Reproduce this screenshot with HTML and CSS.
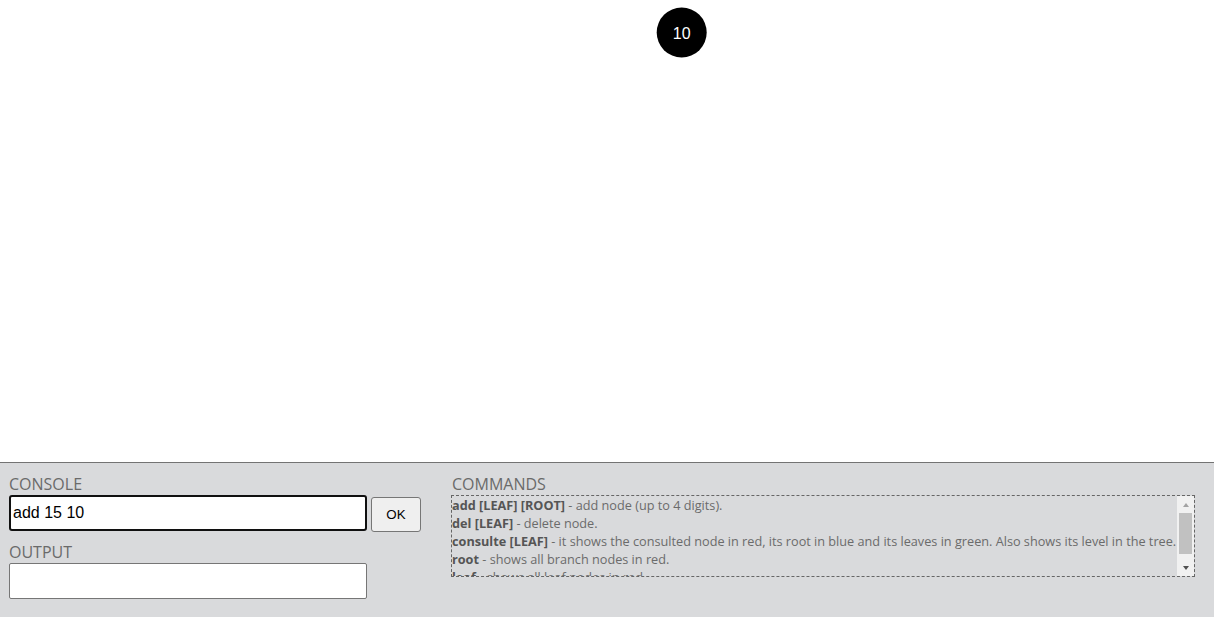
FILE: index.html
```html
<!DOCTYPE html>
<html lang="en">
<head>
<meta charset="utf-8">
<title>Tree</title>
<link rel="stylesheet" href="styles.css">
</head>
<body>
<div class="tree">
  <svg class="tree-canvas" width="1214" height="462" viewBox="0 0 1214 462">
    <g class="node">
      <circle cx="681.7" cy="32.5" r="25" fill="#000"/>
      <text x="681.7" y="38.5" text-anchor="middle" fill="#fff" font-family="Liberation Sans, Arial, sans-serif" font-size="16">10</text>
    </g>
  </svg>
</div>
<div class="panel">
  <div class="left">
    <div class="label">CONSOLE</div>
    <div class="console-row">
      <input class="field field-active" type="text" value="add 15 10">
      <button class="ok">OK</button>
    </div>
    <div class="label label-output">OUTPUT</div>
    <input class="field" type="text" value="">
  </div>
  <div class="right">
    <div class="label">COMMANDS</div>
    <div class="commands">
      <div class="cmd-text">
        <div><b>add [LEAF] [ROOT]</b> - add node (up to 4 digits).</div>
        <div><b>del [LEAF]</b> - delete node.</div>
        <div><b>consulte [LEAF]</b> - it shows the consulted node in red, its root in blue and its leaves in green. Also shows its level in the tree.</div>
        <div><b>root</b> - shows all branch nodes in red.</div>
        <div><b>leaf</b> - shows all leaf nodes in red.</div>
      </div>
      <div class="scrollbar">
        <div class="sb-btn"><span class="arrow-up"></span></div>
        <div class="sb-track"><div class="sb-thumb"></div></div>
        <div class="sb-btn"><span class="arrow-down"></span></div>
      </div>
    </div>
  </div>
</div>
</body>
</html>
```
FILE: styles.css
```css
html, body {
  margin: 0;
  padding: 0;
  background: #fff;
  overflow: hidden;
}

.tree {
  height: 462px;
  border-bottom: 1px solid #737373;
}

.tree-canvas {
  display: block;
}

.panel {
  height: 154px;
  box-sizing: border-box;
  background: #d9dadc;
  display: flex;
  gap: 30px;
  padding: 10px 19px 0 9px;
  font-family: "Open Sans", sans-serif;
}

.left {
  width: 412px;
  display: flex;
  flex-direction: column;
  align-items: flex-start;
}

.right {
  flex: 1;
  display: flex;
  flex-direction: column;
}

.label {
  font-size: 16px;
  line-height: 22px;
  color: #6a6a6a;
  height: 22px;
}

.right .label {
  padding-left: 1px;
}

.label-output {
  margin-top: 9px;
}

.console-row {
  display: flex;
  align-items: flex-start;
  gap: 4px;
}

.field {
  box-sizing: border-box;
  width: 358px;
  height: 36px;
  margin: 0;
  padding: 1px 2px;
  border: 1px solid #767676;
  border-radius: 2px;
  background: #fff;
  font-family: "Liberation Sans", Arial, sans-serif;
  font-size: 16px;
  color: #000;
  outline: none;
}

.field-active {
  border: 2px solid #101010;
  border-radius: 3px;
}

.ok {
  box-sizing: border-box;
  width: 50px;
  height: 35px;
  margin: 2px 0 0 0;
  padding: 1px 6px;
  border: 1px solid #767676;
  border-radius: 3px;
  background: #efefef;
  font-family: "Liberation Sans", Arial, sans-serif;
  font-size: 13.33px;
  color: #000;
}

.commands {
  box-sizing: border-box;
  height: 82px;
  border: 1px dashed #666;
  display: flex;
}

.cmd-text {
  flex: 1;
  overflow: hidden;
  font-size: 12.7px;
  line-height: 18px;
  white-space: nowrap;
  color: #6b6b6b;
}

.cmd-text b {
  color: #555;
  font-weight: 700;
}

.scrollbar {
  width: 17px;
  flex: none;
  background: #f1f1f1;
  display: flex;
  flex-direction: column;
}

.sb-btn {
  height: 17px;
  display: flex;
  align-items: center;
  justify-content: center;
}

.arrow-up {
  width: 0;
  height: 0;
  border-left: 3.5px solid transparent;
  border-right: 3.5px solid transparent;
  border-bottom: 4px solid #a3a3a3;
}

.arrow-down {
  width: 0;
  height: 0;
  border-left: 3.5px solid transparent;
  border-right: 3.5px solid transparent;
  border-top: 4px solid #505050;
}

.sb-track {
  flex: 1;
  padding: 0 2px;
}

.sb-thumb {
  height: 41px;
  background: #c1c1c1;
}
```
